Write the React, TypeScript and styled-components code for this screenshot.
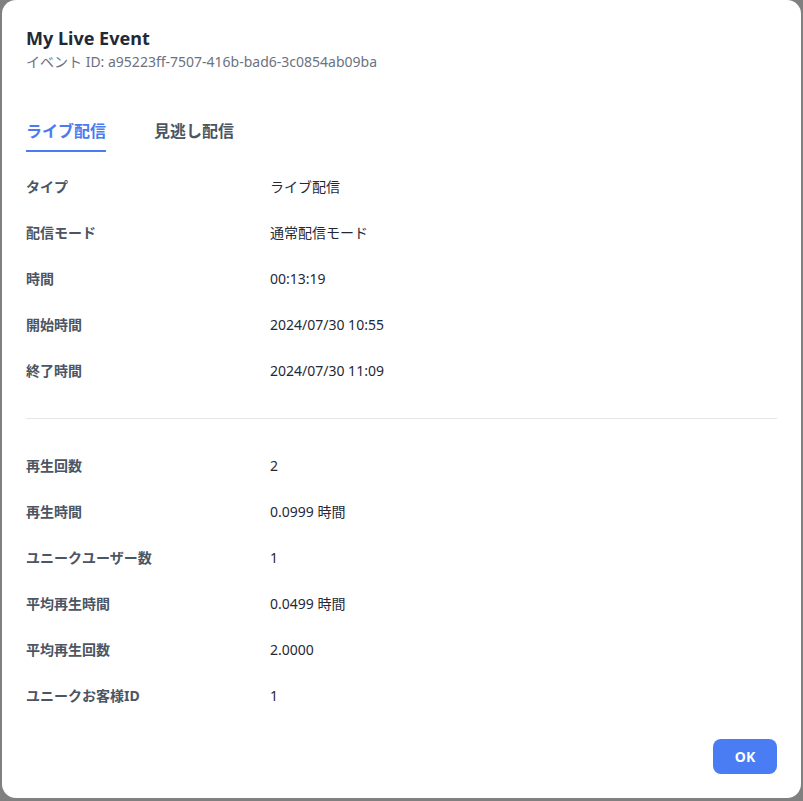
import React from "react";
import styled, { createGlobalStyle } from "styled-components";

const Global = createGlobalStyle`
  html, body { margin: 0; padding: 0; }
  body {
    background: #808080;
    font-family: "Noto Sans", "Noto Sans CJK JP", sans-serif;
    -webkit-font-smoothing: antialiased;
  }
`;

const Backdrop = styled.div`
  width: 803px;
  height: 801px;
  padding: 0 2px 3px 2px;
  box-sizing: border-box;
  display: flex;
`;

const Modal = styled.div`
  flex: 1;
  background: #ffffff;
  border-radius: 14px;
  padding: 24px 24px 24px 24px;
  box-sizing: border-box;
  display: flex;
  flex-direction: column;
`;

const Title = styled.h2`
  margin: 0;
  font-size: 18px;
  line-height: 28px;
  font-weight: 700;
  color: #1f2937;
`;

const Subtitle = styled.div`
  font-size: 14px;
  line-height: 20px;
  color: #6b7280;
`;

const Tabs = styled.div`
  display: flex;
  gap: 48px;
  margin-top: 47px;
`;

const Tab = styled.button<{ $active?: boolean }>`
  all: unset;
  font-size: 16px;
  line-height: 24px;
  font-weight: 700;
  padding-bottom: 7px;
  color: ${(p) => (p.$active ? "#4a7cf0" : "#4b5563")};
  border-bottom: 2px solid ${(p) => (p.$active ? "#4a7cf0" : "transparent")};
`;

const Group = styled.div<{ $top: number }>`
  margin-top: ${(p) => p.$top}px;
  display: flex;
  flex-direction: column;
`;

const Row = styled.div`
  display: grid;
  grid-template-columns: 244px 1fr;
  height: 46px;
  align-items: center;
  font-size: 14px;
  line-height: 20px;
`;

const Label = styled.div`
  font-weight: 700;
  color: #4b5563;
`;

const Value = styled.div`
  color: #1f2937;
`;

const Divider = styled.hr`
  border: none;
  border-top: 1px solid #e5e7eb;
  margin: 24px 0 0 0;
`;

const Footer = styled.div`
  margin-top: auto;
  display: flex;
  justify-content: flex-end;
`;

const OkButton = styled.button`
  width: 64px;
  height: 35px;
  border: none;
  border-radius: 8px;
  background: #4a7cf4;
  color: #fff;
  font-family: inherit;
  font-weight: 700;
  font-size: 14px;
  cursor: pointer;
`;

const first = [
  ["タイプ", "ライブ配信"],
  ["配信モード", "通常配信モード"],
  ["時間", "00:13:19"],
  ["開始時間", "2024/07/30 10:55"],
  ["終了時間", "2024/07/30 11:09"],
];

const second = [
  ["再生回数", "2"],
  ["再生時間", "0.0999 時間"],
  ["ユニークユーザー数", "1"],
  ["平均再生時間", "0.0499 時間"],
  ["平均再生回数", "2.0000"],
  ["ユニークお客様ID", "1"],
];

export default function App() {
  return (
    <>
      <Global />
      <Backdrop>
        <Modal>
          <Title>My Live Event</Title>
          <Subtitle>イベント ID: a95223ff-7507-416b-bad6-3c0854ab09ba</Subtitle>
          <Tabs>
            <Tab $active>ライブ配信</Tab>
            <Tab>見逃し配信</Tab>
          </Tabs>
          <Group $top={12}>
            {first.map(([l, v]) => (
              <Row key={l}>
                <Label>{l}</Label>
                <Value>{v}</Value>
              </Row>
            ))}
          </Group>
          <Divider />
          <Group $top={24}>
            {second.map(([l, v]) => (
              <Row key={l}>
                <Label>{l}</Label>
                <Value>{v}</Value>
              </Row>
            ))}
          </Group>
          <Footer>
            <OkButton>OK</OkButton>
          </Footer>
        </Modal>
      </Backdrop>
    </>
  );
}
